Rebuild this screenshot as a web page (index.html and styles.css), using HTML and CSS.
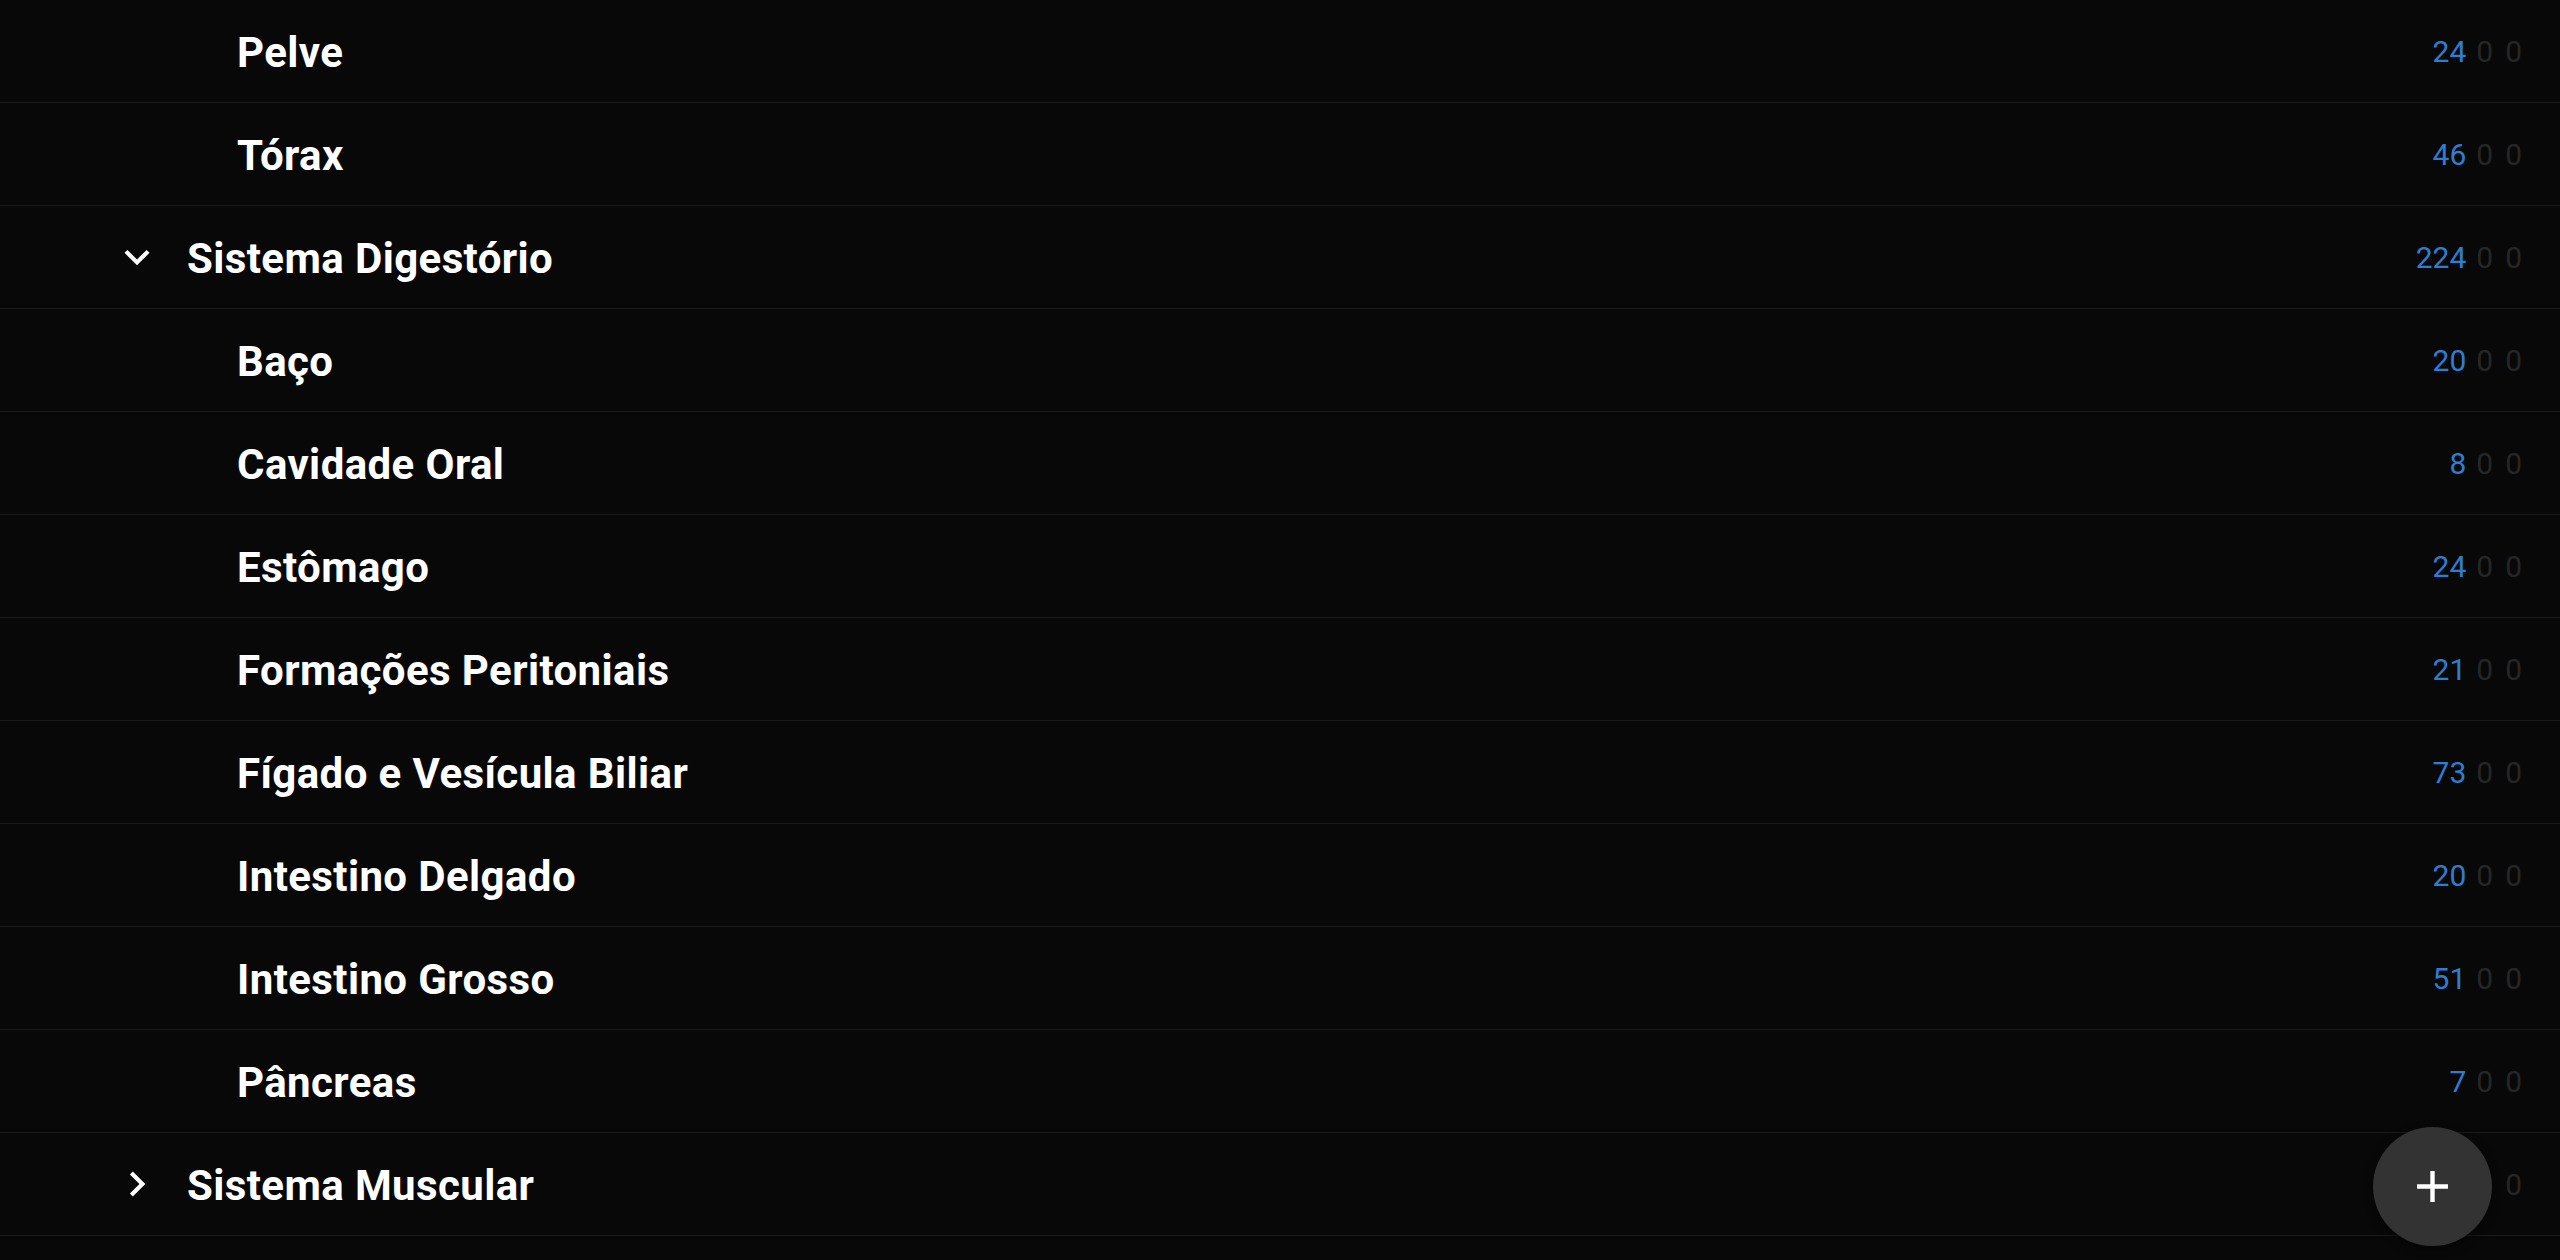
FILE: index.html
```html
<!DOCTYPE html>
<html lang="pt">
<head>
    <meta charset="UTF-8">
    <meta name="viewport" content="width=device-width, initial-scale=1.0">
    <title>Baralhos</title>
    <link rel="stylesheet" href="styles.css">
</head>
<body>
    <ul class="deck-list">
        <li class="deck child">
            <span class="name">Pelve</span>
            <span class="counts"><span class="new">24</span><span class="zero">0</span><span class="zero">0</span></span>
        </li>
        <li class="deck child">
            <span class="name">Tórax</span>
            <span class="counts"><span class="new">46</span><span class="zero">0</span><span class="zero">0</span></span>
        </li>
        <li class="deck parent">
            <svg class="toggle" viewBox="0 0 24 24"><path d="M16.59 8.59L12 13.17 7.41 8.59 6 10l6 6 6-6z"/></svg>
            <span class="name">Sistema Digestório</span>
            <span class="counts"><span class="new">224</span><span class="zero">0</span><span class="zero">0</span></span>
        </li>
        <li class="deck child">
            <span class="name">Baço</span>
            <span class="counts"><span class="new">20</span><span class="zero">0</span><span class="zero">0</span></span>
        </li>
        <li class="deck child">
            <span class="name">Cavidade Oral</span>
            <span class="counts"><span class="new">8</span><span class="zero">0</span><span class="zero">0</span></span>
        </li>
        <li class="deck child">
            <span class="name">Estômago</span>
            <span class="counts"><span class="new">24</span><span class="zero">0</span><span class="zero">0</span></span>
        </li>
        <li class="deck child">
            <span class="name">Formações Peritoniais</span>
            <span class="counts"><span class="new">21</span><span class="zero">0</span><span class="zero">0</span></span>
        </li>
        <li class="deck child">
            <span class="name">Fígado e Vesícula Biliar</span>
            <span class="counts"><span class="new">73</span><span class="zero">0</span><span class="zero">0</span></span>
        </li>
        <li class="deck child">
            <span class="name">Intestino Delgado</span>
            <span class="counts"><span class="new">20</span><span class="zero">0</span><span class="zero">0</span></span>
        </li>
        <li class="deck child">
            <span class="name">Intestino Grosso</span>
            <span class="counts"><span class="new">51</span><span class="zero">0</span><span class="zero">0</span></span>
        </li>
        <li class="deck child">
            <span class="name">Pâncreas</span>
            <span class="counts"><span class="new">7</span><span class="zero">0</span><span class="zero">0</span></span>
        </li>
        <li class="deck parent">
            <svg class="toggle" viewBox="0 0 24 24"><path d="M8.59 16.59L13.17 12 8.59 7.41 10 6l6 6-6 6z"/></svg>
            <span class="name">Sistema Muscular</span>
            <span class="counts"><span class="new">98</span><span class="zero">0</span><span class="zero">0</span></span>
        </li>
    </ul>

    <button class="fab" aria-label="Adicionar">
        <svg viewBox="0 0 24 24"><path d="M19 13h-6v6h-2v-6H5v-2h6V5h2v6h6v2z"/></svg>
    </button>
</body>
</html>
```

FILE: styles.css
```css
body {
    margin: 0;
    background-color: #080808;
    font-family: Roboto, "Noto Sans", sans-serif;
    color: #fff;
    height: 100vh;
    overflow: hidden;
}
.deck-list {
    list-style: none;
    margin: 0;
    padding: 0;
}
.deck {
    display: flex;
    align-items: center;
    height: 102px;
    border-bottom: 1px solid #1a1a1a;
    padding-right: 38px;
}
.deck.child {
    padding-left: 237px;
}
.deck.parent {
    padding-left: 112px;
}
.toggle {
    width: 50px;
    height: 50px;
    fill: #fff;
    margin-right: 25px;
    flex-shrink: 0;
}
.name {
    font-size: 42px;
    font-weight: 700;
    letter-spacing: 0.4px;
    padding-top: 3px;
    flex: 1;
}
.counts {
    display: flex;
    font-size: 30px;
}
.new {
    color: #2f7dd3;
}
.zero {
    color: #262626;
    margin-left: 12px;
}
.new + .zero {
    margin-left: 10px;
}
.fab {
    position: fixed;
    right: 68px;
    bottom: 14px;
    width: 119px;
    height: 119px;
    border-radius: 50%;
    border: none;
    background-color: #333333;
    box-shadow: 0 3px 8px rgba(0, 0, 0, 0.5);
    display: flex;
    align-items: center;
    justify-content: center;
    padding: 0;
}
.fab svg {
    width: 53px;
    height: 53px;
    fill: #fff;
}
```
